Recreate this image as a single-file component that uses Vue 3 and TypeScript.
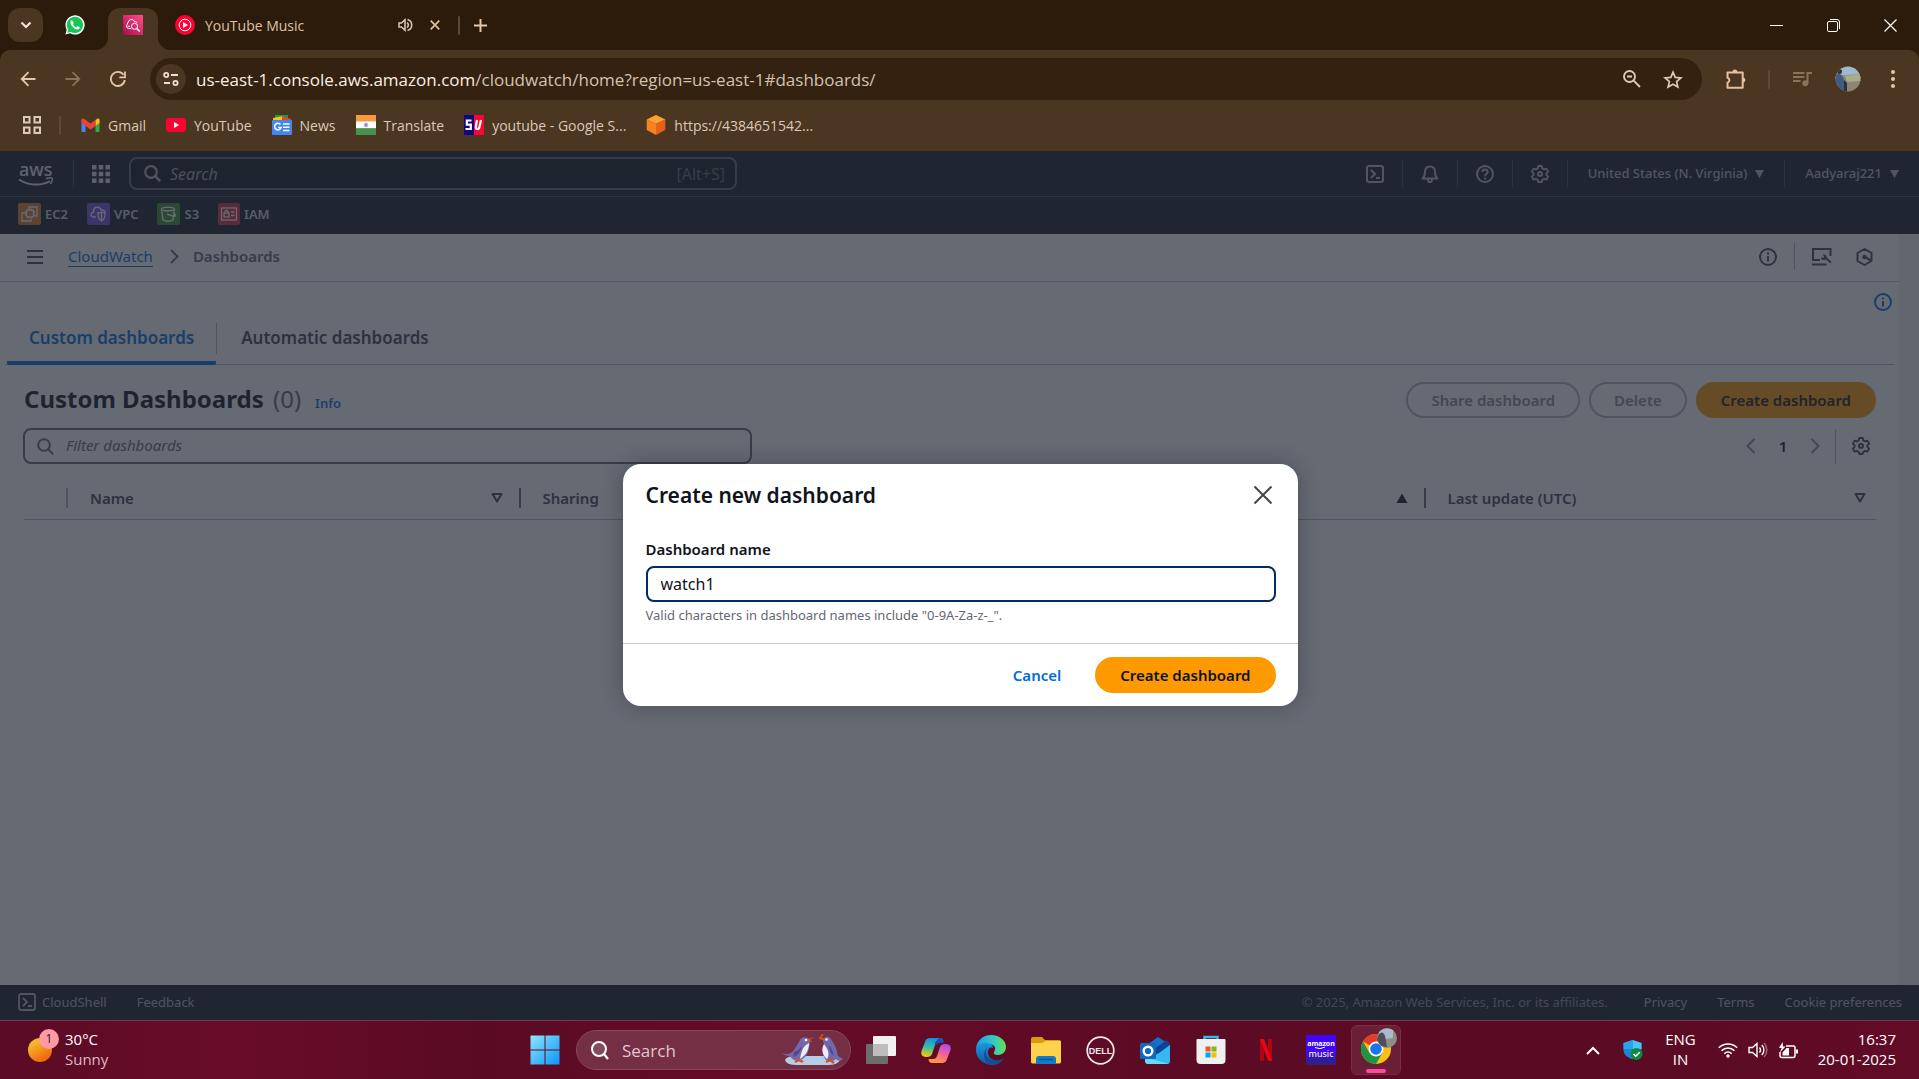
<script setup lang="ts">
import { ref } from 'vue'

const tabTitle = ref('YouTube Music')
const dashboardName = ref('watch1')
const filter = ref('')
const consoleSearch = ref('')

const columns: { label: string; sort: 'down' | 'up' }[] = [
  { label: 'Name', sort: 'down' },
  { label: 'Sharing', sort: 'down' },
  { label: 'Favorite', sort: 'up' },
  { label: 'Last update (UTC)', sort: 'down' },
]
</script>

<template>
  <div class="desktop">
    <header class="browser">
      <div class="tabstrip">
        <button class="tab-search" aria-label="Search tabs">
          <svg width="12" height="8" viewBox="0 0 12 8"><path d="M1.5 1.5 6 6l4.500-4.500" fill="none" stroke="#f6e3d3" stroke-width="2.200" /></svg>
        </button>
        <button class="tab pinned" aria-label="WhatsApp">
          <svg width="20" height="20" viewBox="0 0 20 20">
            <path d="M.4 19.600 1.700 14.700A9.600 9.600 0 1 1 5.300 18.300Z" fill="#fff" />
            <path d="M2.300 17.700 3.200 14.400A8.100 8.100 0 1 1 5.900 16.900Z" fill="#14c656" />
            <path d="M7 5.200c-.8.200-1.700 1.200-1.500 2.500.5 3 3.500 6.200 6.800 6.800 1.500.2 2.600-.9 2.500-2.200l-2.300-1.200-1.200 1.300c-1.600-.6-2.800-1.800-3.400-3.300l1-1.200Z" fill="#fff" />
          </svg>
        </button>
        <button class="tab active" aria-label="CloudWatch">
          <svg width="20" height="20" viewBox="0 0 20 20">
            <defs><linearGradient id="cw" x1="0" y1="1" x2="1" y2="0"><stop offset="0" stop-color="#b0084d" /><stop offset="1" stop-color="#ff4f8b" /></linearGradient></defs>
            <rect width="20" height="20" fill="url(#cw)" />
            <path d="M8 13.500H5.500A2.500 2.500 0 0 1 4 9.500L6 5.500C8 4 10.500 4 11.300 6.500c1.300-.3 2.500.4 2.600 1.600M4.500 11l2.500.5" fill="none" stroke="#fff" />
            <circle cx="11.500" cy="11.300" r="3" fill="none" stroke="#fff" /><path d="m13.700 13.500 3 3" stroke="#fff" stroke-width="1.500" />
          </svg>
        </button>
        <div class="tab wide">
          <svg width="20" height="20" viewBox="0 0 20 20"><circle cx="10" cy="10" r="10" fill="#ff0033" /><circle cx="10" cy="10" r="5.800" fill="none" stroke="#fff" stroke-width="1" /><path d="M8 7v6l5-3Z" fill="#fff" /></svg>
          <span class="tab-title">{{ tabTitle }}</span>
          <button aria-label="Mute tab">
            <svg width="15" height="14" viewBox="0 0 15 14"><path d="M1 5v4h2.500L7 12.200V1.800L3.500 5Z" fill="none" stroke="#dfc9b6" stroke-width="1.500" /><path d="M9 4.500a3 3 0 0 1 0 5M9.500 1.500a5.700 5.700 0 0 1 0 11" fill="none" stroke="#dfc9b6" stroke-width="1.500" /></svg>
          </button>
          <button class="tab-close" aria-label="Close tab">
            <svg width="10" height="10" viewBox="0 0 10 10"><path d="m.700.700 8.600 8.600m0-8.600L.700 9.300" stroke="#dfc0a6" stroke-width="1.700" /></svg>
          </button>
        </div>
        <span class="bar"></span>
        <button class="new-tab" aria-label="New tab">
          <svg width="13" height="13" viewBox="0 0 13 13"><path d="M6.500 0v13M0 6.500h13" stroke="#e6c6ab" stroke-width="2" /></svg>
        </button>
        <div class="window-controls">
          <button aria-label="Minimize"><svg width="13" height="13" viewBox="0 0 13 13"><path d="M0 6.500h13" stroke="#fff" /></svg></button>
          <button aria-label="Restore"><svg width="13" height="13" viewBox="0 0 13 13"><rect x=".5" y="2.500" width="10" height="10" rx="1.500" fill="none" stroke="#fff" /><path d="M3 .5h7a2.500 2.500 0 0 1 2.500 2.500v7" fill="none" stroke="#fff" /></svg></button>
          <button aria-label="Close"><svg width="13" height="13" viewBox="0 0 13 13"><path d="m.5.5 12 12m0-12-12 12" stroke="#fff" stroke-width="1.200" /></svg></button>
        </div>
      </div>

      <div class="toolbar">
        <div class="nav">
          <button aria-label="Back"><svg width="16" height="16" viewBox="0 0 16 16"><path d="M15.500 8H2M8.500 1.200 1.700 8l6.800 6.800" fill="none" stroke="#e6c6ab" stroke-width="1.800" /></svg></button>
          <button aria-label="Forward"><svg width="16" height="16" viewBox="0 0 16 16"><path d="M.5 8H14M7.500 1.200 14.300 8l-6.800 6.800" fill="none" stroke="#8a725d" stroke-width="1.800" /></svg></button>
          <button aria-label="Reload"><svg width="16" height="16" viewBox="0 0 16 16"><path d="M14.800 9A7 7 0 1 1 13.500 3.800M15 .500v5.800H9.300" fill="none" stroke="#e6c6ab" stroke-width="1.800" /></svg></button>
        </div>
        <div class="omnibox">
          <button class="site-info" aria-label="Site information">
            <svg width="16" height="14" viewBox="0 0 16 14"><g fill="none" stroke="#f1ddcc" stroke-width="1.800"><circle cx="3.200" cy="3" r="2.100" /><path d="M8 3h7M1 11h6" /><circle cx="12.500" cy="11" r="2.100" /></g></svg>
          </button>
          <span class="url">us-east-1.console.aws.amazon.com<span>/cloudwatch/home?region=us-east-1#dashboards/</span></span>
          <button aria-label="Zoom"><svg width="18" height="18" viewBox="0 0 18 18"><circle cx="6.500" cy="6.500" r="5.500" fill="none" stroke="#dcc9b9" stroke-width="1.900" /><path d="m10.700 10.700 6.300 6.300M4 6.500h5" stroke="#dcc9b9" stroke-width="1.900" /></svg></button>
          <button class="star" aria-label="Bookmark"><svg width="20" height="19" viewBox="0 0 20 19"><path d="m10 2.200 2.200 5.200 5.700.5-4.300 3.700 1.300 5.500-4.900-2.900-4.900 2.900 1.300-5.500L2.100 7.900l5.700-.5Z" fill="none" stroke="#dcc9b9" stroke-width="1.700" /></svg></button>
        </div>
        <div class="tools">
          <button aria-label="Extensions"><svg width="20" height="20" viewBox="0 0 20 20"><path d="M1.500 3.500h15.200v15.200H1.500v-5a2.600 2.600 0 0 0 0-5Z" fill="none" stroke="#e6c0a0" stroke-width="2" stroke-linejoin="round" /><path d="M6.500 3a2.400 2.400 0 0 1 4.800 0ZM17 8.700a2.400 2.400 0 0 1 0 4.800Z" fill="#e6c0a0" /></svg></button>
          <span class="bar"></span>
          <button class="media" aria-label="Media"><svg width="20" height="16" viewBox="0 0 20 16"><path d="M0 2h11.500M0 6h11.500M0 10h7.500" stroke="#8a725d" stroke-width="1.800" /><circle cx="12.300" cy="12.300" r="3" fill="#8a725d" /><path d="M14.500 12V2H19" fill="none" stroke="#8a725d" stroke-width="2" /></svg></button>
          <button class="avatar" aria-label="Profile"><svg width="26" height="26" viewBox="0 0 26 26"><defs><clipPath id="av"><circle cx="13" cy="13" r="12.500" /></clipPath></defs><g clip-path="url(#av)"><path d="M0 0h26v12H0Z" fill="#9db8cf" /><path d="M0 10 26 8v18H0Z" fill="#8d8474" /><path d="m10 10 16-2v7l-14 1Z" fill="#a9ad8a" /><path d="M1 9c3-3 7 0 8 5l2 12H1Z" fill="#455a80" /><circle cx="4.500" cy="5.500" r="2.500" fill="#3a2f34" /><path d="m9 14 3 3v8H9Z" fill="#2c3140" /></g></svg></button>
          <button class="menu" aria-label="Menu"><svg width="4" height="18" viewBox="0 0 4 18"><g fill="#e6c6ab"><circle cx="2" cy="2" r="2" /><circle cx="2" cy="9" r="2" /><circle cx="2" cy="16" r="2" /></g></svg></button>
        </div>
      </div>

      <nav class="bookmarks">
        <button class="apps" aria-label="Tab groups"><svg width="18" height="18" viewBox="0 0 18 18"><path d="M1 1h5.500v5.500H1ZM11.500 1H17v5.500h-5.500ZM1 11.500h5.500V17H1ZM11.500 11.500H17V17h-5.500Z" fill="none" stroke="#dcc9b9" stroke-width="2" /></svg></button>
        <span class="bar"></span>
        <a href="#"><svg width="19" height="14" viewBox="0 0 19 14"><path d="M.500 1.500h4V14h-3q-1 0-1-1Z" fill="#4285f4" /><path d="M14.500 1.500h4V13q0 1-1 1h-3Z" fill="#34a853" /><path d="M14.500 2.500 16.500.600q2-.6 2 1.500v3l-4 3Z" fill="#fbbc04" /><path d="M.500 2q.3-2 2.300-1.300L9.500 5.500l5-3.500v6l-5 3.500L.500 5Z" fill="#ea4335" /></svg>Gmail</a>
        <a href="#"><svg width="20" height="14" viewBox="0 0 20 14"><rect width="20" height="14" rx="3.500" fill="#ff0033" /><path d="M8 4v6l5-3Z" fill="#fff" /></svg>YouTube</a>
        <a href="#"><svg width="20" height="20" viewBox="0 0 20 20"><path d="M3 0h13v5H3Z" fill="#0f9d58" /><path d="m1 3 10-2 1 5H1Z" fill="#ffc107" /><path d="m10 1 9 3v3h-9Z" fill="#ea4335" /><rect y="5" width="20" height="15" rx="1" fill="#4285f4" /><path d="M8.500 9.500a3.300 3.300 0 1 0 .6 3H6.200M11 9h6.500M11 12.300h6.500M11 15.500h6.500" fill="none" stroke="#fff" stroke-width="1.500" /></svg>News</a>
        <a href="#"><svg width="20" height="20" viewBox="0 0 20 20"><path fill="#f59a41" d="M0 0h20v7H0Z" /><path fill="#fff" d="M0 6.500h20v7H0Z" /><path fill="#46934c" d="M0 13.500h20V20H0Z" /><circle cx="10" cy="10" r="2.400" fill="#b8b7dc" /><circle cx="10" cy="10" r="1" fill="#7777bb" /></svg>Translate</a>
        <a href="#"><svg width="20" height="20" viewBox="0 0 20 20"><path fill="#10067f" d="M0 0h10v20H0Z" /><path fill="#fb0533" d="M10 0h10v20H10Z" /><path d="M7.500 5.500H2.800v4.200h4V14H1.500M13 5l-1.200 7q-.3 2 1.500 2t2.100-2L17 5" fill="none" stroke="#fff" stroke-width="2.200" /></svg>youtube - Google S...</a>
        <a href="#"><svg width="20" height="20" viewBox="0 0 20 20"><path d="m10 0 9.300 4.500L10 9 .700 4.500Z" fill="#ff9f2e" /><path d="M.700 4.500 10 9v11L.700 15Z" fill="#f68220" /><path d="M19.300 4.500 10 9v11l9.300-5Z" fill="#e8611b" /></svg>https://4384651542...</a>
      </nav>
    </header>

    <div class="page">
      <div class="console">
        <header class="global-nav">
          <a class="aws" href="#" aria-label="AWS home">
            <svg width="36" height="36" viewBox="0 0 36 36"><text x="1" y="20" font-family="Noto Sans, sans-serif" font-weight="500" font-size="18" fill="#e8e8ea">aws</text><path d="M1 23.500c9 6 22 7 31 1.500" fill="none" stroke="#e8e8ea" stroke-width="2" /><path d="M28 22.500c3-.7 6-.8 6.300 0s-.3 3.300-2 5.500" fill="none" stroke="#e8e8ea" stroke-width="1.500" /></svg>
          </a>
          <span class="sep"></span>
          <button class="services" aria-label="Services"><svg width="18" height="18" viewBox="0 0 18 18"><path d="M0 0h4.500v4.500H0ZM6.750 0h4.500v4.500h-4.500ZM13.500 0H18v4.500h-4.500ZM0 6.750h4.500v4.500H0ZM6.750 6.750h4.500v4.500h-4.500ZM13.500 6.750H18v4.500h-4.500ZM0 13.500h4.500V18H0ZM6.750 13.500h4.500V18h-4.500ZM13.500 13.500H18V18h-4.500Z" fill="#dedee3" /></svg></button>
          <label class="console-search">
            <svg width="17" height="17" viewBox="0 0 17 17"><circle cx="7" cy="7" r="5.800" fill="none" stroke="#b4b4bb" stroke-width="2.200" /><path d="m11.200 11.200 5 5" stroke="#b4b4bb" stroke-width="2.500" /></svg>
            <input v-model="consoleSearch" type="text" placeholder="Search" aria-label="Search" />
            <span>[Alt+S]</span>
          </label>
          <div class="nav-right">
            <button aria-label="CloudShell"><svg width="18" height="18" viewBox="0 0 18 18"><rect x="1" y="1" width="16" height="16" rx="2" fill="none" stroke="#b9b9c2" stroke-width="2" /><path d="m5 5 4 4-4 4M10 13h4" fill="none" stroke="#b9b9c2" stroke-width="2" /></svg></button>
            <span class="sep"></span>
            <button aria-label="Notifications"><svg width="18" height="18" viewBox="0 0 18 18"><path d="M1.500 13.500C3.500 12 4 10.500 4 7c0-3.500 2-5.500 5-5.500S14 3.500 14 7c0 3.500.5 5 2.500 6.500ZM7 14.500c0 3.500 4 3.500 4 0" fill="none" stroke="#b9b9c2" stroke-width="2" stroke-linejoin="round" /></svg></button>
            <span class="sep"></span>
            <button aria-label="Help"><svg width="18" height="18" viewBox="0 0 18 18"><circle cx="9" cy="9" r="8" fill="none" stroke="#b9b9c2" stroke-width="2" /><path d="M6.300 7c0-3.300 5.400-3.300 5.400 0 0 2-2.700 2-2.700 4.200M9 12.500v2" fill="none" stroke="#b9b9c2" stroke-width="1.900" /></svg></button>
            <span class="sep"></span>
            <button aria-label="Settings"><svg width="18" height="18" viewBox="0 0 18 18"><path d="M7.300 1h3.400l.6 2.400 1.800 1 2.300-.8 1.700 3L15.400 8.400v1.500l1.700 1.700-1.700 3-2.300-.8-1.800 1-.6 2.200H7.300l-.6-2.200-1.800-1-2.300.8-1.700-3L2.600 9.900V8.400L.900 6.600l1.700-3 2.300.8 1.800-1Z" fill="none" stroke="#b9b9c2" stroke-width="1.900" stroke-linejoin="round" /><circle cx="9" cy="9" r="2" fill="none" stroke="#b9b9c2" stroke-width="2" /></svg></button>
            <span class="sep"></span>
            <button class="nav-menu">United States (N. Virginia)<svg width="9" height="10" viewBox="0 0 9 10"><path d="M0 2h9L4.500 10Z" fill="#b9b9c2" /></svg></button>
            <span class="sep"></span>
            <button class="nav-menu">Aadyaraj221<svg width="9" height="10" viewBox="0 0 9 10"><path d="M0 2h9L4.500 10Z" fill="#b9b9c2" /></svg></button>
          </div>
        </header>

        <nav class="favorites">
          <a href="#"><svg width="23" height="22" viewBox="0 0 23 22"><rect width="23" height="22" rx="2" fill="#e07a22" /><g fill="none" stroke="#fff" stroke-width="1.300"><path d="M11 6V4h8v9h-2M7 10H4v8h9v-2" /><rect x="8.500" y="7" width="7" height="7" rx="1" /><path d="M10.500 7V5.500m3 1.500V5.500m-3 10V14m3 1.500V14M8.500 9H7m1.500 3H7M17 9h-1.500m1.500 3h-1.500" /></g></svg>EC2</a>
          <a href="#"><svg width="23" height="22" viewBox="0 0 23 22"><rect width="23" height="22" rx="2" fill="#7a4be0" /><g fill="none" stroke="#fff" stroke-width="1.300"><path d="M9 14H6c-3-1-2-5 .5-5C6 3 13 3 14 7c3-.5 4 1 4 3M11 10c2 0 3-1 4-1s2 1 3 1c0 5-1 7-3.500 8C12 17 11 15 11 10ZM14.500 10v7" /></g></svg>VPC</a>
          <a href="#"><svg width="23" height="22" viewBox="0 0 23 22"><rect width="23" height="22" rx="2" fill="#3f8d26" /><g fill="none" stroke="#fff" stroke-width="1.400"><ellipse cx="11" cy="6" rx="6.500" ry="1.800" /><path d="m4.500 6 1.500 11c2 1.600 8 1.600 10 0l1.500-11M10 11c4 2 9 3 8.500 1.500S16 10 16 10" /></g></svg>S3</a>
          <a href="#"><svg width="22" height="22" viewBox="0 0 22 22"><rect width="22" height="22" rx="2" fill="#d6293f" /><g fill="none" stroke="#fff" stroke-width="1.300"><rect x="3.500" y="5" width="15" height="12" /><rect x="6" y="10" width="5" height="4" /><path d="M7 10V8.500q1.500-2 3 0V10M13 9h3.500M13 12.500h3.500" /></g></svg>IAM</a>
        </nav>

        <main class="workspace">
          <div class="crumb-bar">
            <button class="burger" aria-label="Open navigation"><svg width="16" height="14" viewBox="0 0 16 14"><path d="M0 1h16M0 7h16M0 13h16" stroke="#424650" stroke-width="2" /></svg></button>
            <nav class="crumbs">
              <a href="#">CloudWatch</a>
              <svg width="9" height="15" viewBox="0 0 9 15"><path d="m1 1 6.500 6.500L1 14" fill="none" stroke="#656871" stroke-width="2" /></svg>
              <span>Dashboards</span>
            </nav>
            <div class="crumb-tools">
              <button aria-label="Info panel"><svg width="18" height="18" viewBox="0 0 18 18"><circle cx="9" cy="9" r="8" fill="none" stroke="#424650" stroke-width="2" /><path d="M9 8v5.500M9 4.500v2" stroke="#424650" stroke-width="2" /></svg></button>
              <span class="line"></span>
              <button aria-label="Diagnostics"><svg width="20" height="18" viewBox="0 0 20 18"><path d="M8 12H1V1h17.500v7M0 16.500h14.500M13 9.500l6 5" fill="none" stroke="#424650" stroke-width="2" /><path d="m9 9 2 1 1-1-1-2.500c3-.5 4 1 3.500 3.500l-2 2C10 12.500 8.500 11 9 9Z" fill="#424650" /></svg></button>
              <button class="hexagon" aria-label="Amazon Q"><svg width="17" height="18" viewBox="0 0 17 18"><path d="m8.500 1 7 4v8l-7 4-7-4V5Z" fill="none" stroke="#424650" stroke-width="2" stroke-linejoin="round" /><circle cx="8.500" cy="9" r="2.200" fill="#424650" /><path d="m9 9 6 3.500" stroke="#424650" stroke-width="2.200" /></svg></button>
            </div>
          </div>

          <button class="info-toggle" aria-label="Help panel"><svg width="18" height="18" viewBox="0 0 18 18"><circle cx="9" cy="9" r="8" fill="none" stroke="#006ce0" stroke-width="2" /><path d="M9 8v5.500M9 4.500v2" stroke="#006ce0" stroke-width="2" /></svg></button>

          <div class="view-tabs">
            <button class="current">Custom dashboards</button>
            <span class="line"></span>
            <button>Automatic dashboards</button>
          </div>

          <section class="panel">
            <div class="panel-head">
              <h1>Custom Dashboards <span>(0)</span></h1>
              <a href="#">Info</a>
              <div class="actions">
                <button class="pill" disabled>Share dashboard</button>
                <button class="pill" disabled>Delete</button>
                <button class="pill primary">Create dashboard</button>
              </div>
            </div>
            <div class="filter-row">
              <label class="filter">
                <svg width="17" height="17" viewBox="0 0 17 17"><circle cx="7" cy="7" r="5.800" fill="none" stroke="#656871" stroke-width="2" /><path d="m11.200 11.200 5 5" stroke="#656871" stroke-width="2" /></svg>
                <input v-model="filter" type="text" placeholder="Filter dashboards" aria-label="Filter dashboards" />
              </label>
              <div class="pager">
                <button aria-label="Previous page"><svg width="10" height="16" viewBox="0 0 10 16"><path d="M8.500 1 1.500 8l7 7" fill="none" stroke="#8c8c94" stroke-width="2" /></svg></button>
                <button class="num">1</button>
                <button aria-label="Next page"><svg width="10" height="16" viewBox="0 0 10 16"><path d="m1.500 1 7 7-7 7" fill="none" stroke="#8c8c94" stroke-width="2" /></svg></button>
                <span class="line"></span>
                <button aria-label="Preferences"><svg width="18" height="18" viewBox="0 0 18 18"><path d="M7.300 1h3.400l.6 2.400 1.800 1 2.300-.8 1.700 3L15.400 8.400v1.500l1.700 1.700-1.700 3-2.300-.8-1.800 1-.6 2.200H7.300l-.6-2.200-1.800-1-2.300.8-1.700-3L2.600 9.900V8.400L.900 6.600l1.700-3 2.300.8 1.800-1Z" fill="none" stroke="#424650" stroke-width="1.900" stroke-linejoin="round" /><circle cx="9" cy="9" r="2" fill="none" stroke="#424650" stroke-width="2" /></svg></button>
              </div>
            </div>
            <table>
              <thead>
                <tr>
                  <th class="select-col"></th>
                  <th v-for="c in columns" :key="c.label">
                    <div class="cell">
                      {{ c.label }}
                      <svg width="12" height="10" viewBox="0 0 12 10">
                        <path v-if="c.sort === 'down'" d="M1.500 1h9L6 8.500Z" fill="none" stroke="#424650" stroke-width="2" stroke-linejoin="round" />
                        <path v-else d="M.5 10h11L6 .5Z" fill="#0f141a" />
                      </svg>
                    </div>
                  </th>
                </tr>
              </thead>
            </table>
          </section>
        </main>

        <footer class="console-footer">
          <a href="#"><svg width="18" height="18" viewBox="0 0 18 18"><rect x="1" y="1" width="16" height="16" rx="2" fill="none" stroke="#b9b9c2" stroke-width="1.800" /><path d="m5 5 4 4-4 4M10 13h4" fill="none" stroke="#b9b9c2" stroke-width="1.800" /></svg>CloudShell</a>
          <a href="#">Feedback</a>
          <span class="copy">© 2025, Amazon Web Services, Inc. or its affiliates.</span>
          <a href="#" class="privacy">Privacy</a>
          <a href="#">Terms</a>
          <a href="#">Cookie preferences</a>
        </footer>
      </div>

      <div class="overlay">
        <form class="modal" role="dialog" aria-labelledby="modal-title" @submit.prevent>
          <div class="modal-head">
            <h2 id="modal-title">Create new dashboard</h2>
            <button type="button" aria-label="Close dialog"><svg width="20" height="20" viewBox="0 0 20 20"><path d="m1.500 1.500 17 17m0-17-17 17" stroke="#424650" stroke-width="2" /></svg></button>
          </div>
          <div class="field">
            <label for="dashboard-name">Dashboard name</label>
            <input id="dashboard-name" v-model="dashboardName" type="text" />
            <p>Valid characters in dashboard names include "0-9A-Za-z-_".</p>
          </div>
          <div class="modal-foot">
            <button type="button" class="cancel">Cancel</button>
            <button type="submit" class="pill primary">Create dashboard</button>
          </div>
        </form>
      </div>
    </div>

    <footer class="taskbar">
      <button class="weather">
        <span class="sun"><b>1</b></span>
        <span class="two-line"><span>30°C</span><span class="soft">Sunny</span></span>
      </button>
      <div class="dock">
        <button aria-label="Start"><svg width="30" height="30" viewBox="0 0 30 30"><defs><linearGradient id="win" x1="0" y1="0" x2="1" y2="1"><stop offset="0" stop-color="#8fe6ff" /><stop offset="1" stop-color="#0a94f6" /></linearGradient></defs><path d="M1 .5h13.500v14H.5V1ZM15.500.5h14v14h-14ZM.5 15.500h14v14H.5ZM15.500 15.500h14v14h-14Z" fill="url(#win)" /></svg></button>
        <label class="task-search">
          <svg width="18" height="19" viewBox="0 0 18 19"><circle cx="8" cy="8" r="7" fill="#ffffff22" stroke="#fff" stroke-width="2" /><path d="m13 13 4 5" stroke="#fff" stroke-width="2.200" /></svg>
          <input type="text" placeholder="Search" aria-label="Search" />
          <svg width="62" height="32" viewBox="0 0 62 32">
            <path d="M3 26q1-4 12-4h32q11 0 11 4-2 5-12 5H15Q4 31 3 26Z" fill="#b5cce6" />
            <path d="M0 19c5 2 9 1 12-3l5-8c1-4 5-6 9-4 3 2 2 6 1 10-1 7-5 12-12 13-4-1-6-3-7-5-3 0-6-1-8-3Z" fill="#7468ad" />
            <path d="M27 9c0 7-3 12-9 16 1-5 2-11 6-14Z" fill="#efeaf4" />
            <path d="m26 5 6-2-4 3 3 2-5-1" fill="#d8501f" />
            <path d="M12 18c3-1 6-3 8-7-1 7-4 11-9 12Z" fill="#554a8e" />
            <path d="M41 7c0-5 7-6 9 0 4 5 5 11 6 15l5 3c-2 2-5 2-7 0-4 4-10 3-12-2-2-5-1-10 0-13Z" fill="#7468ad" />
            <path d="M42 10c-3 5-2 11 3 15 3-4 1-9-1-12Z" fill="#efeaf4" />
            <path d="M47 11c3 3 4 7 5 11-3-2-5-6-5-11Z" fill="#554a8e" />
            <path d="m43 5-5-1 3-4M42 6l-4-2" fill="none" stroke="#d8501f" stroke-width="1.700" />
            <circle cx="24" cy="6" r="1.300" fill="#fff" /><circle cx="44.500" cy="5.500" r="1.300" fill="#fff" />
            <path d="m13 28 4-2 4 2m23 0 4-2 4 3" fill="none" stroke="#d8501f" stroke-width="2.500" />
          </svg>
        </label>
        <button aria-label="Task view"><svg width="30" height="28" viewBox="0 0 30 28"><rect x="0" y="8" width="22" height="20" rx="1" fill="#6d6d6d" /><rect x="7" width="23" height="20" rx="1" fill="#f1f1f1" /><path d="M7 8h15v12H7Z" fill="#bdbdbd" /></svg></button>
        <button aria-label="Copilot"><svg width="30" height="27" viewBox="0 0 30 27"><defs><linearGradient id="ca" x1=".5" y1="0" x2=".3" y2="1"><stop offset="0" stop-color="#148fe3" /><stop offset=".5" stop-color="#37bfa0" /><stop offset="1" stop-color="#ffc800" /></linearGradient><linearGradient id="cb" x1=".8" y1="0" x2=".4" y2="1"><stop offset="0" stop-color="#a84bea" /><stop offset=".5" stop-color="#f1629c" /><stop offset="1" stop-color="#ff9a3d" /></linearGradient></defs><path d="M9 1h10q3 0 3.500 4H18q-3 0-4 3l-3 9q-1 3-5 3-7 0-5.500-6L4 5q1-4 5-4Z" fill="url(#ca)" /><path d="M21 26H11q-3 0-3.500-4H12q3 0 4-3l3-9q1-3 5-3 7 0 5.500 6L26 22q-1 4-5 4Z" fill="url(#cb)" /><path d="M18 1q3.500 0 4.500 5h-4q-2 0-3 2L13.500 6Z" fill="#1b4fb5" /></svg></button>
        <button aria-label="Edge"><svg width="30" height="30" viewBox="0 0 30 30"><defs><linearGradient id="ea" x1="0" y1=".3" x2="1" y2=".3"><stop offset="0" stop-color="#1a9fe8" /><stop offset=".6" stop-color="#35c9c5" /><stop offset="1" stop-color="#66e04b" /></linearGradient><linearGradient id="eb" x1="0" y1="0" x2="0" y2="1"><stop offset="0" stop-color="#1d97dc" /><stop offset="1" stop-color="#0c59a4" /></linearGradient></defs><path d="M0 15C0 6 7 0 15 0c9 0 15 6 15 12 0 5-4 8-8 8-3 0-5-1-4-3 3-4 0-8-5-8C6 9 1 12 0 15Z" fill="url(#ea)" /><path d="M0 15C1 10 6 7 11 8c4 0 6 3 6 5-5-3-9 8 1 12 4 2 8 0 10-2-4 7-12 8-17 6C4 27 0 21 0 15Z" fill="url(#eb)" /><path d="M13 12c-6 3-3 13 5 13 4 1 8 0 10-2-4 7-12 8-15 6-7-4-6-15 0-17Z" fill="#144d94" /></svg></button>
        <button aria-label="File Explorer"><svg width="30" height="27" viewBox="0 0 30 27"><path d="M0 2q0-2 2-2h9l3 3h14q2 0 2 2v8H0Z" fill="#dc9b0b" /><path d="M0 6h11l4-2h15v21q0 1.500-2 1.500H2Q0 26.500 0 25Z" fill="#ffd14c" /><path d="M5 27v-5q0-3 3-3h14q3 0 3 3v5Z" fill="#157bc7" /><path d="M8 22.500h14" stroke="#0a569a" stroke-width="1.500" /></svg></button>
        <button aria-label="Dell"><svg width="29" height="29" viewBox="0 0 29 29"><circle cx="14.500" cy="14.500" r="13.300" fill="none" stroke="#f4e9ed" stroke-width="1.700" /><text x="14.500" y="18" text-anchor="middle" font-family="Liberation Sans, sans-serif" font-size="9" font-weight="700" fill="#f4e9ed">DELL</text></svg></button>
        <button aria-label="Outlook"><svg width="31" height="27" viewBox="0 0 31 27"><path d="M7 8 18 0l12 8-9 12H7Z" fill="#1770c6" /><path d="m14 12 13-9 3 5-13 12Z" fill="#0c4298" /><path d="M30 8v16q0 3-3 3H8l-3-3 14-8Z" fill="#35b8ef" /><path d="m5 20 24 7H8q-3 0-3-3Z" fill="#68dbf8" /><rect y="6" width="16" height="16" rx="1.500" fill="#1068c4" /><circle cx="8" cy="14" r="4.300" fill="none" stroke="#fff" stroke-width="2.400" /></svg></button>
        <button aria-label="Microsoft Store"><svg width="30" height="30" viewBox="0 0 30 30"><path d="M8.500 6V2h13v4" fill="none" stroke="#37b6ef" stroke-width="2.500" /><path d="M.5 5q0-1 1-1h27q1 0 1 1v20q0 4-4 4h-21q-4 0-4-4Z" fill="#f0f0f0" /><path d="M9.500 11.500h5v5h-5Z" fill="#f35325" /><path d="M15.500 11.500h5v5h-5Z" fill="#81bc06" /><path d="M9.500 17.500h5v5h-5Z" fill="#05a6f0" /><path d="M15.500 17.500h5v5h-5Z" fill="#ffba08" /></svg></button>
        <button aria-label="Netflix"><svg width="12" height="22" viewBox="0 0 12 22"><path d="M0 0h4v21.500l-4 .5ZM8 0h4v22l-4-.5Z" fill="#b1060f" /><path d="M0 0h4l8 22-4-.5Z" fill="#e50914" /></svg></button>
        <button aria-label="Amazon Music"><svg width="30" height="30" viewBox="0 0 30 30"><defs><linearGradient id="am" x1="0" y1="0" x2="0" y2="1"><stop offset=".5" stop-color="#3f06fa" /><stop offset="1" stop-color="#2c2472" /></linearGradient></defs><path d="M0 0h30v30H0Z" fill="url(#am)" /><g font-family="Noto Sans, sans-serif" fill="#fff" text-anchor="middle"><text x="15" y="11" font-size="7" font-weight="700">amazon</text><text x="15" y="22" font-size="9">music</text></g><path d="M9 12.500q5 2.500 10-.5" fill="none" stroke="#fff" /></svg></button>
        <button class="running" aria-label="Chrome">
          <svg width="36" height="38" viewBox="0 0 36 38"><circle cx="15" cy="21" r="15" fill="#fbc116" /><path d="M15 21 2 13.500A15 15 0 0 1 28 13.500H15Z" fill="#e33b2e" /><path d="M2 13.500A15 15 0 0 0 15 36l6.500-11.300L15 21 8.500 24.700Z" fill="#229342" /><circle cx="15" cy="21" r="7.400" fill="#fff" /><circle cx="15" cy="21" r="5.800" fill="#1a73e8" /><circle cx="26" cy="10" r="10" fill="#8f8d8a" /><path d="M18 4q6-6 14-2v8l-14 2Z" fill="#a9bccb" /><path d="M18 6q4-4 6 2l2 11q-7 1-10-8Z" fill="#4f4d56" /></svg>
        </button>
      </div>
      <div class="tray">
        <button aria-label="Hidden icons"><svg width="14" height="9" viewBox="0 0 14 9"><path d="m1 8 6-6 6 6" fill="none" stroke="#fff" stroke-width="2" /></svg></button>
        <button class="shield" aria-label="Security"><svg width="20" height="20" viewBox="0 0 20 20"><path d="m9.500 0 9 3v7c0 5-4 7-9 9.500C4.500 17 .5 15 .5 10V3Z" fill="#1b84d8" /><path d="m9.500 0 9 3v6h-9Z" fill="#4cc3f5" /><path d="M9.500 0v9h-9V3Z" fill="#2aa3ea" /><circle cx="13.500" cy="14" r="6" fill="#10893e" /><path d="m10.500 14 2.200 2.200 4-4" fill="none" stroke="#fff" stroke-width="1.600" /></svg></button>
        <button class="two-line center lang"><span>ENG</span><span>IN</span></button>
        <button class="status" aria-label="Network, volume, battery">
          <svg width="20" height="16" viewBox="0 0 20 16"><g fill="none" stroke="#fff" stroke-width="1.500"><path d="M.8 5.800a13 13 0 0 1 18.400 0M3.500 8.800a9 9 0 0 1 13 0M6.300 11.700a5 5 0 0 1 7.400 0" /></g><circle cx="10" cy="14" r="1.700" fill="#fff" /></svg>
          <svg width="20" height="16" viewBox="0 0 20 16"><g fill="none" stroke="#fff" stroke-width="1.400"><path d="M1 5.500v5h3.500L9 14.500v-13L4.500 5.500ZM11.500 5.500a4 4 0 0 1 0 5M13.800 3a7 7 0 0 1 0 10" /><path d="M16 1a10 10 0 0 1 0 14" opacity=".4" /></g></svg>
          <svg width="20" height="17" viewBox="0 0 20 17"><path d="M8 4h7.500q1.500 0 1.500 1.500v8q0 2-2 2H4q-2 0-2-2V10" fill="none" stroke="#fff" stroke-width="1.500" /><path d="M18 7.500h2v4h-2ZM8.500 6H11v7.500H4.500v-3Z" fill="#fff" /><path d="M4.500 0 1 6h2.500L2 10.500 7.500 4.500H5Z" fill="#fff" /></svg>
        </button>
        <button class="two-line right"><span>16:37</span><span>20-01-2025</span></button>
      </div>
    </footer>
  </div>
</template>

<style>
body { margin: 0; background: #2c1b0a; }
</style>

<style scoped>
* { box-sizing: border-box; }
button { padding: 0; border: 0; background: none; color: inherit; font: inherit; display: inline-flex; align-items: center; justify-content: center; }
a { color: inherit; text-decoration: none; }
svg { display: block; flex: none; }
input { min-width: 0; border: 0; outline: 0; background: none; color: inherit; font: inherit; padding: 0; }

.desktop { display: flex; flex-direction: column; min-height: 100vh; font-family: "Noto Sans", "Open Sans", sans-serif; font-size: 14px; }

/* browser */
.browser { flex: none; font-family: "Open Sans", "Noto Sans", sans-serif; color: #dcc9b9; background: #2c1b0a; }
.tabstrip { height: 50px; display: flex; align-items: center; padding-left: 8px; }
.tab-search { width: 35px; height: 34px; border-radius: 12px; background: #4b3621; }
.tab { display: flex; align-items: center; }
.pinned { margin-left: 22px; width: 20px; }
.active { position: relative; align-self: flex-end; margin-left: 23px; width: 50px; height: 42px; padding-bottom: 8px; background: #4b3621; border-radius: 12px 12px 0 0; }
.active::before, .active::after { content: ""; position: absolute; bottom: 0; width: 14px; height: 14px; }
.active::before { right: 100%; background: radial-gradient(circle at 0 0, transparent 14px, #4b3621 15px); }
.active::after { left: 100%; background: radial-gradient(circle at 100% 0, transparent 14px, #4b3621 15px); }
.wide { margin-left: 17px; width: 265px; }
.tab-title { flex: 1; margin-left: 10px; font-size: 14px; color: #dfc0a6; }
.tab-close { margin-left: 17px; }
.bar { flex: none; width: 2px; height: 19px; background: #5f4935; border-radius: 1px; }
.tabstrip > .bar { margin-left: 18px; }
.new-tab { margin-left: 14px; }
.window-controls { margin-left: auto; display: flex; }
.window-controls button { width: 57px; height: 50px; }
.toolbar { height: 58px; padding: 0 24px 0 20px; display: flex; align-items: center; background: #4b3621; border-radius: 10px 10px 0 0; }
.nav { display: flex; gap: 29px; }
.omnibox { flex: 1; margin-left: 24px; height: 42px; padding: 0 19px 0 6px; border-radius: 21px; background: #34210f; display: flex; align-items: center; }
.site-info { width: 30px; height: 30px; border-radius: 15px; background: #4b3621; }
.url { flex: 1; margin-left: 10px; font-size: 17px; color: #fbeee3; }
.url span { color: #d3c1b1; }
.star { margin-left: 22px; }
.tools { margin-left: 24px; display: flex; align-items: center; }
.tools .bar { margin: 0 23px 0 22px; }
.avatar { margin-left: 22px; }
.menu { margin-left: 30px; }
.bookmarks { height: 43px; padding: 0 0 9px 23px; display: flex; align-items: center; background: #4b3621; font-size: 14px; }
.bookmarks .bar { margin: 0 0 0 18px; }
.bookmarks a { margin-left: 20px; display: flex; align-items: center; gap: 8px; }

/* console */
.page { position: relative; flex: 1; display: flex; flex-direction: column; }
.console { flex: 1; display: flex; flex-direction: column; background: #fff; color: #0f141a; }
.global-nav { height: 46px; padding: 0 18px; display: flex; align-items: center; background: #161d26; color: #b9b9c2; border-bottom: 1px solid #424650; }
.sep { flex: none; width: 1px; height: 27px; background: #424650; }
.global-nav > .sep { margin-left: 19px; }
.services { margin-left: 18px; }
.console-search { margin-left: 19px; width: 608px; height: 33px; padding: 0 10px 0 13px; display: flex; align-items: center; border: 2px solid #656871; border-radius: 8px; background: #0f141a; font-size: 16px; color: #8c8c94; }
.console-search input { flex: 1; margin-left: 9px; font-style: italic; }
.console-search input::placeholder { color: #a4a4ad; }
.console-search span { color: #656871; }
.nav-right { margin-left: auto; display: flex; align-items: center; gap: 18px; }
.nav-menu { margin: 0 2px; padding-bottom: 2px; gap: 8px; font-size: 13px; font-weight: 500; }
.favorites { height: 37px; padding: 0 18px 2px; display: flex; align-items: center; gap: 19px; background: #161d26; color: #d0d0d6; font-size: 13px; font-weight: 600; border-bottom: 1px solid #232b37; }
.favorites a { display: flex; align-items: center; gap: 4px; }
.workspace { flex: 1; border-right: 20px solid #f1f1f1; }
.crumb-bar { height: 48px; padding: 0 26px 2px 27px; display: flex; align-items: center; border-bottom: 1px solid #c6c6cd; }
.crumbs { margin-left: 25px; display: flex; align-items: center; font-size: 15px; line-height: 19px; }
.crumbs a { color: #006ce0; border-bottom: 1px solid #006ce0; }
.crumbs svg { margin: 0 14px 0 17px; }
.crumbs span { padding-bottom: 1px; color: #656871; font-weight: 600; }
.crumb-tools { margin-left: auto; display: flex; align-items: center; gap: 17px; }
.hexagon { margin-left: 7px; }
.line { flex: none; width: 1px; height: 27px; background: #b4b4bb; }
.info-toggle { display: flex; margin: 11px 7px 0 auto; }
.view-tabs { margin: 0 5px; height: 54px; display: flex; border-bottom: 1px solid #b4b4bb; font-size: 17px; font-weight: 600; color: #424650; }
.view-tabs button { height: 50px; padding: 2px 24px 0; }
.view-tabs .current { margin-left: 2px; padding: 2px 22px 0; height: 54px; color: #006ce0; border-bottom: 4px solid #006ce0; border-radius: 2px; }
.view-tabs .line { height: 31px; margin-top: 12px; }
.panel { padding: 17px 23px 0 24px; }
.panel-head { display: flex; align-items: center; height: 36px; }
h1 { margin: 0; padding-bottom: 2px; font-size: 24px; line-height: 30px; font-weight: 700; }
h1 span { margin-left: 3px; color: #656871; font-weight: 400; }
.panel-head > a { margin: 6px 0 0 14px; font-size: 13px; font-weight: 600; color: #006ce0; }
.actions { margin-left: auto; display: flex; gap: 9px; }
.pill { height: 36px; padding: 0 23px 1px; border: 2px solid #b4b4bb; border-radius: 18px; color: #8c8c94; font-size: 15px; font-weight: 600; }
.pill.primary { border-color: #ff9900; background: #ff9900; color: #0f141a; }
.filter-row { margin: 10px 0 0 -1px; display: flex; align-items: center; justify-content: space-between; }
.filter { flex: 0 1 729px; height: 36px; padding: 0 12px; display: flex; align-items: center; border: 2px solid #656871; border-radius: 8px; font-size: 15px; font-style: italic; }
.filter input { flex: 1; margin-left: 12px; padding-bottom: 2px; }
.filter input::placeholder { color: #656871; opacity: 1; }
.pager { display: flex; align-items: center; font-size: 15px; margin-right: 6px; }
.pager .num { width: 54px; font-weight: 600; }
.pager .line { height: 35px; margin: 0 16px 0 15px; }
table { margin-top: 14px; width: 100%; table-layout: fixed; border-collapse: collapse; border-bottom: 1px solid #b4b4bb; }
th { padding: 0; height: 41px; font-size: 15px; font-weight: 600; color: #424650; }
.select-col { width: 42px; }
.cell { height: 20px; padding: 0 16px 0 22px; display: flex; align-items: center; justify-content: space-between; border-left: 2px solid #656871; }
.select-col + th .cell { border-color: #b4b4bb; }
th:last-child .cell { padding-right: 10px; }
.console-footer { height: 35px; padding: 0 17px 1px 18px; display: flex; align-items: center; gap: 30px; background: #161d26; color: #8c8c94; font-size: 13px; }
.console-footer a { display: flex; align-items: center; gap: 6px; color: #b4b4bb; }
.copy { margin-left: auto; }
.privacy { margin-left: 6px; }

/* dialog */
.overlay { position: absolute; inset: 0; padding: 0 0 1px 1px; display: flex; align-items: center; justify-content: center; background: rgba(35, 43, 55, 0.7); }
.modal { width: 675px; max-width: 90%; border-radius: 18px; background: #fff; color: #0f141a; box-shadow: 0 0 22px rgba(15, 20, 26, 0.3); }
.modal-head { height: 63px; padding: 0 25px 1px 23px; display: flex; align-items: center; justify-content: space-between; }
h2 { margin: 0; font-size: 21px; line-height: 28px; font-weight: 600; }
.field { padding: 11px 22px 18px 23px; }
.field label { display: block; line-height: 22px; font-size: 15px; font-weight: 600; }
.field input { display: block; width: 100%; height: 36px; margin-top: 6px; padding: 0 13px; border: 2px solid #002b66; border-radius: 8px; font-size: 16px; }
.field p { margin: 3px 0 0; line-height: 20px; font-size: 13px; color: #656871; }
.modal-foot { height: 63px; padding: 0 22px; display: flex; align-items: center; justify-content: flex-end; gap: 34px; border-top: 1px solid #c6c6cd; }
.cancel { padding-bottom: 1px; color: #006ce0; font-size: 15px; font-weight: 600; }

/* taskbar */
.taskbar { flex: none; height: 59px; display: grid; grid-template-columns: 1fr auto 1fr; align-items: center; border-top: 1px solid #7b3a4c; background: linear-gradient(90deg, #5a0b25 0%, #690c29 12%, #5a0b24 25%, #650b27 40%, #5d0b25 60%, #590b23 80%, #620b27 100%); color: #fff; font-family: "Open Sans", "Noto Sans", sans-serif; font-size: 15px; }
.weather { margin-left: 28px; justify-self: start; gap: 13px; }
.sun { position: relative; width: 24px; height: 24px; border-radius: 12px; background: linear-gradient(150deg, #f1b62c 25%, #f2690d 80%); }
.sun b { position: absolute; left: 11px; top: -9px; width: 20px; height: 20px; border-radius: 10px; background: #ff99a4; color: #1b1b1b; font-size: 12px; line-height: 20px; font-weight: 400; }
.two-line { padding-bottom: 2px; display: flex; flex-direction: column; align-items: flex-start; line-height: 20px; }
.soft { color: #dbbcc6; }
.two-line.center { align-items: center; }
.two-line.right { align-items: flex-end; }
.dock { display: flex; align-items: center; }
.dock button { width: 55px; height: 50px; }
.task-search { width: 275px; height: 40px; margin: 0 2px 0 4px; padding: 0 6px 0 14px; display: flex; align-items: center; border: 1px solid #88475a; border-radius: 20px; background: #742f44; font-size: 17px; }
.task-search input { flex: 1; margin-left: 13px; }
.task-search input::placeholder { color: #e1c7cf; }
.dock .running { position: relative; width: 50px; margin: 0 1px 0 3px; border: 1px solid #762f46; border-radius: 6px; background: #6a1f37; }
.running svg { margin: -6px 0 0 6px; }
.running::after { content: ""; position: absolute; left: 14px; bottom: 1px; width: 20px; height: 4px; border-radius: 2px; background: #ff4b9f; }
.tray { justify-self: end; display: flex; align-items: center; margin-right: 23px; }
.shield { margin-left: 23px; }
.lang { margin-left: 22px; }
.status { margin: 0 20px 0 22px; gap: 10px; }
</style>
